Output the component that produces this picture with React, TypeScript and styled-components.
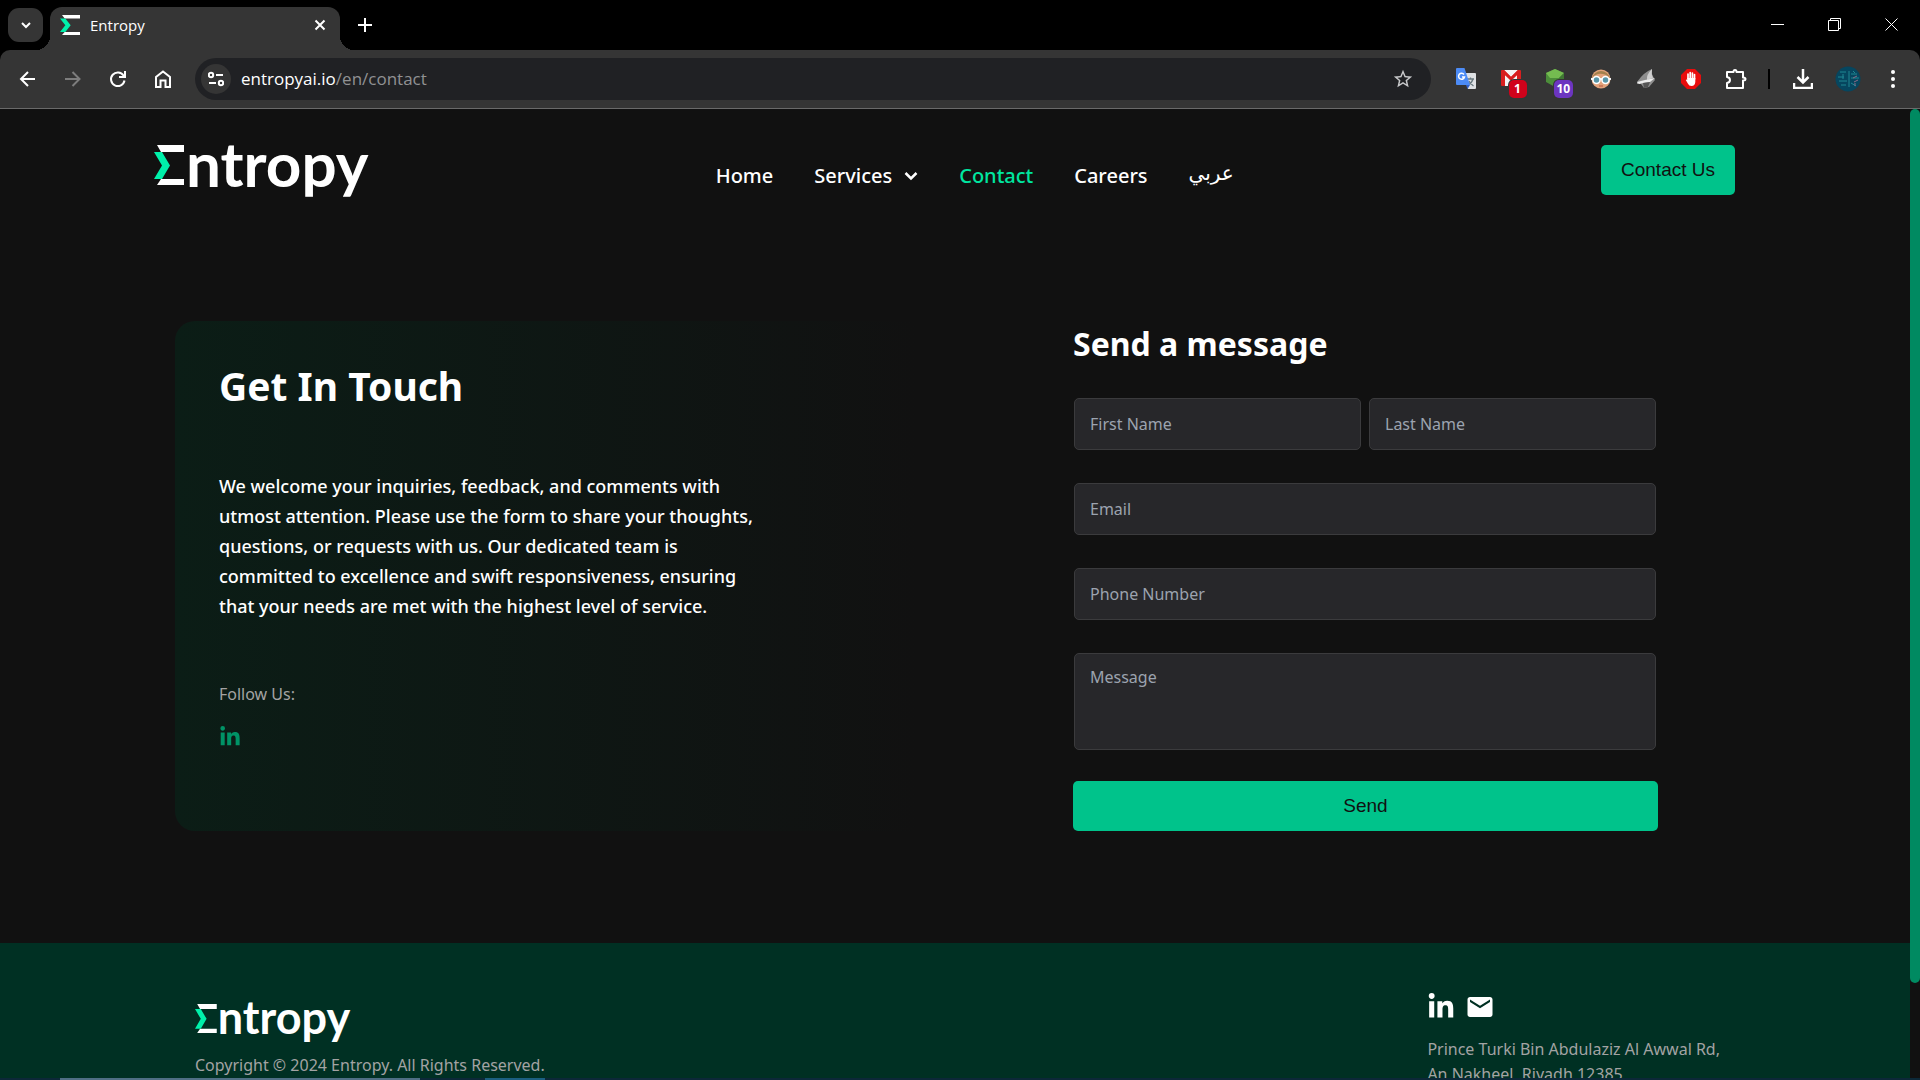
import React from "react";
import styled, { createGlobalStyle } from "styled-components";
import { FaLinkedinIn } from "react-icons/fa";
import { MdEmail, MdOutlineStarBorder } from "react-icons/md";

const ui = '"Open Sans", "Noto Sans", sans-serif';
const site = '"Noto Sans", "DejaVu Sans", sans-serif';
const arial = '"Liberation Sans", Arial, sans-serif';

const Global = createGlobalStyle`
  *, *::before, *::after { box-sizing: border-box; }
  body { margin: 0; background: #111111; }
  h1, h2, p { margin: 0; }
  button, input, textarea { font: inherit; margin: 0; }
  button { cursor: pointer; border: 0; padding: 0; background: none; color: inherit; }
  a { color: inherit; text-decoration: none; }
  svg { display: block; }
`;

const Window = styled.div`
  display: flex;
  flex-direction: column;
  height: 100vh;
  overflow: hidden;
  background: #000;
  color: #fff;
  font-family: ${ui};
`;

/* ---------- browser chrome ---------- */

const TabStrip = styled.div`
  display: flex;
  align-items: flex-end;
  height: 50px;
  flex: none;
  padding-left: 8px;
`;

const TabSearch = styled.button`
  display: grid;
  place-items: center;
  width: 35px;
  height: 34px;
  margin: 0 7px 8px 0;
  border-radius: 11px;
  background: #353535;
`;

const Tab = styled.div`
  position: relative;
  display: flex;
  align-items: center;
  width: 290px;
  height: 43px;
  padding: 0 10px 8px;
  border-radius: 12px 12px 0 0;
  background: #353535;
  font-size: 15px;
  line-height: 20px;

  &::before,
  &::after {
    content: "";
    position: absolute;
    bottom: 0;
    width: 14px;
    height: 14px;
  }
  &::before {
    right: 100%;
    background: radial-gradient(circle at 0 0, transparent 14px, #353535 14px);
  }
  &::after {
    left: 100%;
    background: radial-gradient(circle at 100% 0, transparent 14px, #353535 14px);
  }
`;

const TabTitle = styled.span`
  flex: 1;
  padding-left: 10px;
`;

const StripButton = styled.button`
  display: grid;
  place-items: center;
  width: 20px;
  height: 20px;
`;

const NewTab = styled(StripButton)`
  width: 50px;
  height: 50px;
`;

const WindowControls = styled.div`
  display: flex;
  align-self: flex-start;
  margin-left: auto;
`;

const WindowButton = styled.button`
  display: grid;
  place-items: center;
  width: 57px;
  height: 48px;
`;

const Toolbar = styled.div`
  display: flex;
  align-items: center;
  flex: none;
  height: 59px;
  padding: 0 5px;
  border-bottom: 1px solid #6a6a6a;
  border-radius: 10px 10px 0 0;
  background: #353535;
`;

const ToolButton = styled.button<{ $dim?: boolean }>`
  display: grid;
  place-items: center;
  flex: none;
  width: 45px;
  height: 42px;
  color: ${(p) => (p.$dim ? "#7d7d7d" : "#fff")};
`;

const ExtensionIcon = styled.span`
  position: relative;
  display: block;
`;

const Badge = styled.span<{ $color: string }>`
  position: absolute;
  top: 12px;
  left: 9px;
  min-width: 18px;
  padding: 0 3px;
  border-radius: 5px;
  background: ${(p) => p.$color};
  box-shadow: 0 0 0 1px #353535;
  font-weight: 700;
  font-size: 12px;
  line-height: 18px;
  text-align: center;
`;

const Omnibox = styled.div`
  display: flex;
  align-items: center;
  flex: 1;
  height: 42px;
  margin: 0 12px 0 10px;
  padding: 0 6px;
  border-radius: 21px;
  background: #202124;
`;

const SiteInfo = styled.button`
  display: grid;
  place-items: center;
  width: 30px;
  height: 30px;
  border-radius: 50%;
  background: #353535;
`;

const Address = styled.span`
  flex: 1;
  padding-left: 10px;
  color: #909193;
  font-size: 17px;
  line-height: 24px;

  b {
    color: #fff;
    font-weight: 400;
  }
`;

const Separator = styled.span`
  flex: none;
  width: 2px;
  height: 20px;
  margin: 0 10px;
  background: #000;
`;

/* ---------- web page ---------- */

const Viewport = styled.div`
  display: flex;
  flex: 1;
  min-height: 0;
  background: #111111;
`;

const Page = styled.div`
  flex: 1;
  min-width: 0;
  overflow: hidden;
  font-family: ${site};
`;

const ScrollTrack = styled.div`
  flex: none;
  width: 10px;
  background: #111111;
`;

const ScrollThumb = styled.div`
  height: 90.2%;
  border-radius: 5px;
  background: #008a61;
`;

const Header = styled.header`
  display: flex;
  justify-content: space-between;
  padding: 36px 175px 0 154px;
`;

const Brand = styled.a<{ $size: "large" | "small" }>`
  display: flex;
  align-items: flex-start;
  width: fit-content;
  height: ${(p) => (p.$size === "large" ? 50 : 38)}px;
  gap: ${(p) => (p.$size === "large" ? 2 : 1)}px;
  font-family: Lato, sans-serif;
  font-weight: 700;
  font-size: ${(p) => (p.$size === "large" ? 62 : 45)}px;
  line-height: ${(p) => (p.$size === "large" ? 36 : 26)}px;

  svg {
    width: auto;
    height: ${(p) => (p.$size === "large" ? 40 : 29)}px;
  }
`;

const Nav = styled.nav`
  display: flex;
  gap: 41px;
  height: 50px;
  margin-right: 20px;
  padding-top: 16px;
  font-weight: 500;
  font-size: 20px;
  line-height: 30px;
`;

const NavLink = styled.a<{ $active?: boolean }>`
  display: flex;
  align-items: center;
  gap: 12px;
  height: 30px;
  color: ${(p) => (p.$active ? "#00e6a0" : "#fff")};

  &:lang(ar) {
    height: 24px;
  }
`;

const PrimaryButton = styled.button`
  height: 50px;
  padding: 0 20px;
  border-radius: 5px;
  background: #00c38b;
  color: #111111;
  font-family: ${arial};
  font-size: 19px;
  line-height: 24px;
`;

const Main = styled.main`
  display: grid;
  grid-template-columns: 1fr 1fr;
  padding: 126px 175px 112px;
`;

const Card = styled.section`
  padding: 35px 44px;
  border-radius: 20px;
  background: linear-gradient(90deg, #0b1d16, #111111 95%);
`;

const CardTitle = styled.h1`
  font-weight: 700;
  font-size: 39px;
  line-height: 60px;
`;

const CardText = styled.p`
  max-width: 550px;
  margin-top: 55px;
  font-weight: 500;
  font-size: 18px;
  line-height: 30px;
`;

const FollowLabel = styled.p`
  margin: 61px 0 20px;
  color: #a3a3a3;
  font-size: 16px;
  line-height: 24px;
`;

const SocialLink = styled.a`
  display: block;
  width: fit-content;
  color: #009366;
`;

const Form = styled.form`
  display: flex;
  flex-direction: column;
  padding: 0 77px 0 118px;
`;

const FormTitle = styled.h2`
  margin-bottom: 32px;
  font-weight: 700;
  font-size: 32px;
  line-height: 45px;
`;

const Fields = styled.div`
  display: grid;
  grid-template-columns: 1fr 1fr;
  gap: 33px 8px;
  padding: 0 2px 0 1px;
  margin-bottom: 31px;
`;

const Field = styled.input<{ $wide?: boolean }>`
  grid-column: ${(p) => (p.$wide ? "1 / -1" : "auto")};
  width: 100%;
  height: 52px;
  padding: 0 15px;
  border: 1px solid #3b3b3d;
  border-radius: 5px;
  outline: 0;
  resize: none;
  background: #27272a;
  color: #fff;
  font-size: 16px;
  line-height: 22px;

  &::placeholder {
    color: #9ca3af;
    opacity: 1;
  }
`;

const MessageField = styled(Field)`
  height: 97px;
  padding: 12px 15px;
`;

const Footer = styled.footer`
  display: flex;
  justify-content: space-between;
  padding: 51px 190px 40px 195px;
  background: #003023;
  color: #a3a3a3;
  font-size: 16px;
  line-height: 25px;
`;

const FooterBrand = styled.div`
  padding-top: 10px;
  color: #fff;

  p {
    margin-top: 11px;
    color: #a3a3a3;
  }
`;

const Contacts = styled.div`
  display: flex;
  gap: 10px;
  align-items: center;
  height: 26px;
  margin-bottom: 17px;
  color: #fff;
`;

const AddressBlock = styled.address`
  font-style: normal;
`;

const Taskbar = styled.div`
  display: flex;
  flex: none;
  height: 2px;
  padding-left: 60px;
  background: #0c2838;
`;

const TaskItem = styled.span<{ $width: number; $color: string }>`
  width: ${(p) => p.$width}px;
  margin-right: 65px;
  background: ${(p) => p.$color};
`;

/* ---------- drawings ---------- */

const SigmaMark = ({ size }: { size?: number }) => (
  <svg viewBox="0 0 30 40" width={size} height={size} preserveAspectRatio="none" aria-hidden="true">
    <path d="M3 0H30V7H7ZM7 34H30V40H3Z" fill="#fff" />
    <path d="M0 7H8L16 20.500L8 34H0L8 20.500Z" fill="#00f0aa" />
  </svg>
);

const Logo = ({ size }: { size: "large" | "small" }) => (
  <Brand href="#home" $size={size} aria-label="Entropy">
    <SigmaMark />
    <span>ntropy</span>
  </Brand>
);

type StrokeProps = { size?: number; width?: number; children: React.ReactNode };

const Stroke = ({ size = 20, width = 2, children }: StrokeProps) => (
  <svg
    width={size}
    height={size}
    viewBox={`0 0 ${size} ${size}`}
    fill="none"
    stroke="currentColor"
    strokeWidth={width}
    aria-hidden="true"
  >
    {children}
  </svg>
);

const TranslateIcon = () => (
  <svg width="22" height="22" viewBox="0 0 22 22" aria-hidden="true">
    <path d="M8 5H20Q21 5 21 6V20Q21 21 20 21H13Z" fill="#dfe1e4" />
    <path d="M12 11H19M15.500 9.500V11M18 11Q17 15 13 17M14 13Q15.500 16 18.500 18" stroke="#6b7a80" strokeWidth="1.300" fill="none" />
    <path d="M11 17H15L12.500 21Z" fill="#3060c8" />
    <path d="M2 0H9.500L15 17H2Q1 17 1 16V1Q1 0 2 0Z" fill="#4c8bf5" />
    <path d="M9 6.500A3 3 0 1 0 9.500 9H7" stroke="#fff" strokeWidth="1.500" fill="none" />
  </svg>
);

const MailCheckerIcon = () => (
  <svg width="22" height="22" viewBox="0 0 22 22" aria-hidden="true">
    <rect x="1" y="2" width="20" height="16" rx="1" fill="#d81f1f" />
    <path d="M4 2H18L11 9Z" fill="#f4f4f4" />
    <path d="M5 7L11 12L17 7V18H5Z" fill="#f4f4f4" />
    <path d="M3 3L11 11L19 3" stroke="#d81f1f" strokeWidth="3" fill="none" />
  </svg>
);

const CubeIcon = () => (
  <svg width="22" height="22" viewBox="0 0 22 22" aria-hidden="true">
    <path d="M10 1L19 5V14L10 19L1 14V5Z" fill="#4c8d3a" />
    <path d="M10 1L19 5L14 10L5 10L1 5Z" fill="#74bb50" />
    <path d="M14 10L19 5V14L11 18Z" fill="#3f7732" />
  </svg>
);

const GogglesIcon = () => (
  <svg width="20" height="20" viewBox="0 0 20 20" aria-hidden="true">
    <circle cx="10" cy="10" r="9.500" fill="#e2a27a" />
    <path d="M1 9A9.300 9.300 0 0 1 19 9Q14 4 7 5Q3 6 1 9Z" fill="#a3814c" />
    <path d="M0 10H20" stroke="#f4f4f4" strokeWidth="2" />
    <circle cx="5.500" cy="11" r="3.500" fill="#5896a8" stroke="#fff" strokeWidth="1.500" />
    <circle cx="14.500" cy="11" r="3.500" fill="#5896a8" stroke="#fff" strokeWidth="1.500" />
    <path d="M8 17H12" stroke="#b5553c" />
  </svg>
);

const SharkIcon = () => (
  <svg width="20" height="20" viewBox="0 0 20 20" aria-hidden="true">
    <path d="M1 13Q8 3 16 0Q15 5 18 9L19 11L13 18L8 19L5 15L1 15Z" fill="#8e8e8e" />
    <path d="M16 0Q15 5 17 9L11 11Q10 6 16 0Z" fill="#cfcfcf" />
    <path d="M1 13L9 11L19 9L14 13L7 14L3 15Z" fill="#ececec" />
    <path d="M7 14L14 13L12 18L8 19Z" fill="#555" />
  </svg>
);

const BlockerIcon = () => (
  <svg width="20" height="20" viewBox="0 0 20 20" aria-hidden="true">
    <path d="M6 0H14L20 6V14L14 20H6L0 14V6Z" fill="#e80d0d" />
    <path
      d="M7 10V5M9.200 9V3.500M11.400 9V4M13.500 10V5.500"
      stroke="#fff"
      strokeWidth="1.700"
      strokeLinecap="round"
    />
    <path d="M6.200 9H14.300V13Q14 17 10.500 17Q8 17 6.800 14.500L4.800 11Q5.500 10 6.500 11Z" fill="#fff" />
  </svg>
);

const Avatar = () => (
  <svg width="26" height="26" viewBox="0 0 26 26" aria-hidden="true">
    <circle cx="13" cy="13" r="12.500" fill="#06465f" />
    <path
      d="M5 6H11M14 5V21M3 11H9M16 8H22M4 15H12M16 12H24M6 19H11M16 17L21 20M8 8V13M18 5L20 7"
      stroke="#1f8793"
      strokeWidth="1"
      fill="none"
    />
    <path d="M18 12L22 10M19 16L23 14M20 17V20" stroke="#8b6a86" strokeWidth="1" />
  </svg>
);

const BrowserChrome = () => (
  <>
    <TabStrip>
      <TabSearch aria-label="Search tabs">
        <Stroke size={12}>
          <path d="M2 4L6 8L10 4" />
        </Stroke>
      </TabSearch>
      <Tab>
        <SigmaMark size={20} />
        <TabTitle>Entropy</TabTitle>
        <StripButton aria-label="Close tab">
          <Stroke size={12} width={2}>
            <path d="M1.500 1.500L10.500 10.500M10.500 1.500L1.500 10.500" />
          </Stroke>
        </StripButton>
      </Tab>
      <NewTab aria-label="New tab">
        <Stroke size={14}>
          <path d="M7 0V14M0 7H14" />
        </Stroke>
      </NewTab>
      <WindowControls>
        <WindowButton aria-label="Minimize">
          <Stroke size={13} width={1}>
            <path d="M0 6.500H13" />
          </Stroke>
        </WindowButton>
        <WindowButton aria-label="Restore">
          <Stroke size={13} width={1}>
            <path d="M0.500 2.500H10.500V12.500H0.500ZM2.500 2V0.500H12.500V10.500H11" />
          </Stroke>
        </WindowButton>
        <WindowButton aria-label="Close">
          <Stroke size={13} width={1}>
            <path d="M0.500 0.500L12.500 12.500M12.500 0.500L0.500 12.500" />
          </Stroke>
        </WindowButton>
      </WindowControls>
    </TabStrip>
    <Toolbar>
      <ToolButton aria-label="Back">
        <Stroke>
          <path d="M17 10H3.500M10 3L3 10L10 17" />
        </Stroke>
      </ToolButton>
      <ToolButton aria-label="Forward" $dim>
        <Stroke>
          <path d="M2 10H16M9.500 3L16.500 10L9.500 17" />
        </Stroke>
      </ToolButton>
      <ToolButton aria-label="Reload">
        <Stroke>
          <path d="M16.500 11.500A6.800 6.800 0 1 1 15.500 6.500L17 8M17 2V8H11" />
        </Stroke>
      </ToolButton>
      <ToolButton aria-label="Home">
        <Stroke>
          <path d="M3 18V8L10 2.500L17 8V18H12.500V11.500H7.500V18Z" />
        </Stroke>
      </ToolButton>
      <Omnibox>
        <SiteInfo aria-label="Site information">
          <Stroke size={16}>
            <circle cx="3" cy="4" r="2.200" />
            <path d="M8 4H15M1 12H8" />
            <circle cx="13" cy="12" r="2.200" />
          </Stroke>
        </SiteInfo>
        <Address>
          <b>entropyai.io</b>/en/contact
        </Address>
        <ToolButton aria-label="Bookmark this page">
          <MdOutlineStarBorder size={22} color="#c8c9cb" />
        </ToolButton>
      </Omnibox>
      <ToolButton aria-label="Translate">
        <TranslateIcon />
      </ToolButton>
      <ToolButton aria-label="Mail checker">
        <ExtensionIcon>
          <MailCheckerIcon />
          <Badge $color="#d0021b">1</Badge>
        </ExtensionIcon>
      </ToolButton>
      <ToolButton aria-label="Cube">
        <ExtensionIcon>
          <CubeIcon />
          <Badge $color="#6c35c0">10</Badge>
        </ExtensionIcon>
      </ToolButton>
      <ToolButton aria-label="Goggles">
        <GogglesIcon />
      </ToolButton>
      <ToolButton aria-label="Shark">
        <SharkIcon />
      </ToolButton>
      <ToolButton aria-label="Blocker">
        <BlockerIcon />
      </ToolButton>
      <ToolButton aria-label="Extensions">
        <Stroke size={22}>
          <path
            d="M2 4H8.500Q8.500 2 10 2Q11.500 2 11.500 4H18V9.500Q20.500 9.500 20.500 11Q20.500 12.500 18 12.500V20H2V15Q5 14.500 5 12Q5 9.500 2 9Z"
            strokeLinejoin="round"
          />
        </Stroke>
      </ToolButton>
      <Separator />
      <ToolButton aria-label="Downloads">
        <Stroke size={20} width={2}>
          <path d="M10 0V13M4.500 8L10 13.500L15.500 8M1 14V19H19V14" strokeWidth="2.500" />
        </Stroke>
      </ToolButton>
      <ToolButton aria-label="Profile">
        <Avatar />
      </ToolButton>
      <ToolButton aria-label="Menu">
        <svg width="4" height="18" viewBox="0 0 4 18" fill="currentColor" aria-hidden="true">
          <circle cx="2" cy="2" r="2" />
          <circle cx="2" cy="9" r="2" />
          <circle cx="2" cy="16" r="2" />
        </svg>
      </ToolButton>
    </Toolbar>
  </>
);

const inputs = [
  { name: "first", label: "First Name", type: "text", wide: false },
  { name: "last", label: "Last Name", type: "text", wide: false },
  { name: "email", label: "Email", type: "email", wide: true },
  { name: "phone", label: "Phone Number", type: "tel", wide: true },
];

export default function App() {
  return (
    <Window>
      <Global />
      <BrowserChrome />
      <Viewport>
        <Page>
          <Header>
            <Logo size="large" />
            <Nav>
              <NavLink href="#home">Home</NavLink>
              <NavLink href="#services">
                Services
                <Stroke size={14}>
                  <path d="M1.500 4L7 9.500L12.500 4" strokeWidth="2.500" />
                </Stroke>
              </NavLink>
              <NavLink href="#contact" $active>
                Contact
              </NavLink>
              <NavLink href="#careers">Careers</NavLink>
              <NavLink href="#ar" lang="ar">
                عربي
              </NavLink>
            </Nav>
            <PrimaryButton>Contact Us</PrimaryButton>
          </Header>
          <Main>
            <Card>
              <CardTitle>Get In Touch</CardTitle>
              <CardText>
                We welcome your inquiries, feedback, and comments with utmost attention. Please use
                the form to share your thoughts, questions, or requests with us. Our dedicated team
                is committed to excellence and swift responsiveness, ensuring that your needs are
                met with the highest level of service.
              </CardText>
              <FollowLabel>Follow Us:</FollowLabel>
              <SocialLink href="#linkedin" aria-label="LinkedIn">
                <FaLinkedinIn size={22} />
              </SocialLink>
            </Card>
            <Form onSubmit={(event) => event.preventDefault()}>
              <FormTitle>Send a message</FormTitle>
              <Fields>
                {inputs.map((field) => (
                  <Field
                    key={field.name}
                    $wide={field.wide}
                    name={field.name}
                    type={field.type}
                    placeholder={field.label}
                    aria-label={field.label}
                  />
                ))}
                <MessageField
                  as="textarea"
                  $wide
                  name="message"
                  placeholder="Message"
                  aria-label="Message"
                />
              </Fields>
              <PrimaryButton type="submit">Send</PrimaryButton>
            </Form>
          </Main>
          <Footer>
            <FooterBrand>
              <Logo size="small" />
              <p>Copyright © 2024 Entropy. All Rights Reserved.</p>
            </FooterBrand>
            <div>
              <Contacts>
                <a href="#linkedin" aria-label="LinkedIn">
                  <FaLinkedinIn size={28} />
                </a>
                <a href="#mail" aria-label="Email">
                  <MdEmail size={30} />
                </a>
              </Contacts>
              <AddressBlock>
                Prince Turki Bin Abdulaziz Al Awwal Rd,
                <br />
                An Nakheel, Riyadh 12385
              </AddressBlock>
            </div>
          </Footer>
        </Page>
        <ScrollTrack>
          <ScrollThumb />
        </ScrollTrack>
      </Viewport>
      <Taskbar>
        <TaskItem $width={360} $color="#4f6f85" />
        <TaskItem $width={60} $color="#1b5f80" />
      </Taskbar>
    </Window>
  );
}
